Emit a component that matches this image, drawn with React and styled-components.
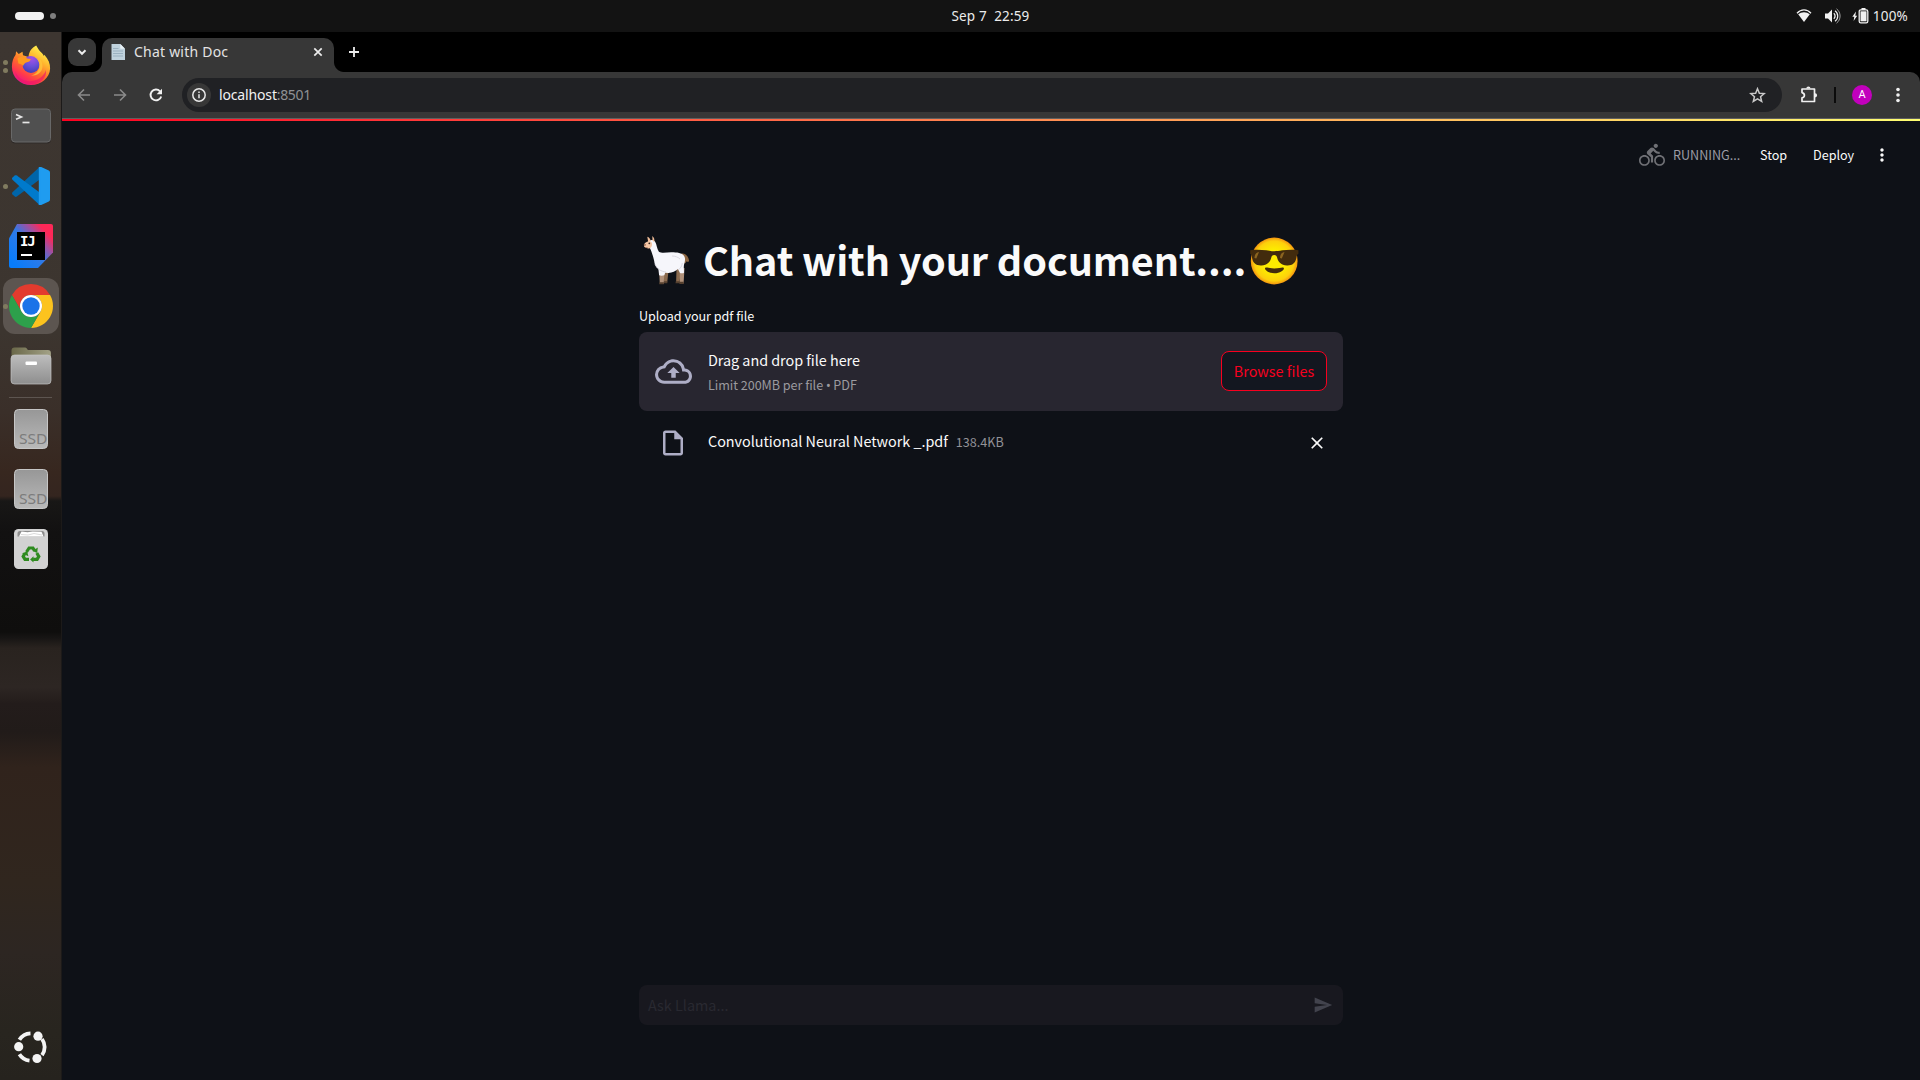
import React from "react";
import styled, { createGlobalStyle } from "styled-components";
import {
  MdDirectionsBike,
  MdOutlineCloudUpload,
  MdOutlineInsertDriveFile,
  MdClose,
  MdSend,
  MdMoreVert,
} from "react-icons/md";

const ui = `"Noto Sans", "Open Sans", sans-serif`;
const sourceSans = `"Noto Sans CJK SC", "Noto Sans CJK JP", sans-serif`;

const GlobalStyle = createGlobalStyle`
  * { box-sizing: border-box; }
  body { margin: 0; background: #000; overflow: hidden; }
  svg { display: block; flex: none; }
`;

const Desktop = styled.div`
  width: 1920px;
  height: 1080px;
  display: flex;
  flex-direction: column;
  font-family: ${ui};
  overflow: hidden;
`;

/* ---------- text ---------- */
const Text = styled.span`
  font-family: ${(p) => p.$font || sourceSans};
  font-size: ${(p) => p.$size}px;
  font-weight: ${(p) => p.$weight || 400};
  line-height: ${(p) => p.$line || 24}px;
  letter-spacing: ${(p) => p.$track || 0}px;
  color: ${(p) => p.$color || "#fafafa"};
  white-space: pre;
`;
const Bullet = styled.span`
  font-family: ${ui};
`;

/* ---------- top bar ---------- */
const TopBar = styled.header`
  height: 32px;
  flex: none;
  background: #131313;
  display: grid;
  grid-template-columns: 1fr auto 1fr;
  align-items: center;
  padding: 0 12px 0 15px;
`;
const Workspaces = styled.div`
  display: flex;
  align-items: center;
  gap: 6px;
`;
const ActiveWorkspace = styled.i`
  width: 29px;
  height: 8px;
  border-radius: 4px;
  background: #f2f2f2;
`;
const IdleWorkspace = styled.i`
  width: 6px;
  height: 6px;
  border-radius: 50%;
  background: #7f7f7f;
`;
const Clock = styled.div`
  display: flex;
  padding-left: 58px;
`;
const Tray = styled.div`
  display: flex;
  justify-content: flex-end;
  align-items: center;
`;
const TraySlot = styled.div`
  width: ${(p) => p.$w}px;
`;

/* ---------- dock ---------- */
const Workarea = styled.div`
  flex: 1;
  display: flex;
  min-height: 0;
`;
const Dock = styled.nav`
  width: 62px;
  flex: none;
  padding-top: 4px;
  display: flex;
  flex-direction: column;
  border-right: 1px solid #1c1a19;
  background: linear-gradient(
    to bottom,
    #3d3631 0px,
    #3c352f 300px,
    #3a2f29 380px,
    #37271f 440px,
    #34251f 464px,
    #181716 469px,
    #121111 500px,
    #0f0e0d 600px,
    #171514 606px,
    #29231f 616px,
    #2d2623 655px,
    #231c1b 672px,
    #211b19 700px,
    #30231c 735px,
    #30261e 850px,
    #2d2622 920px,
    #28251f 1000px,
    #26231e 1048px
  );
`;
const DockItem = styled.div`
  position: relative;
  height: 60px;
  width: 62px;
  flex: none;
  display: flex;
  align-items: center;
  justify-content: center;
`;
const DockTile = styled.div`
  width: 56px;
  height: 56px;
  border-radius: 12px;
  display: flex;
  align-items: center;
  justify-content: center;
  background: ${(p) => (p.$active ? "#5c5550" : "transparent")};
`;
const RunningDots = styled.div`
  position: absolute;
  left: 3px;
  top: 0;
  bottom: 0;
  display: flex;
  flex-direction: column;
  justify-content: center;
  gap: 3px;
`;
const RunningDot = styled.i`
  width: 5px;
  height: 5px;
  border-radius: 50%;
  background: #807b5f;
`;
const DockRule = styled.div`
  height: 1px;
  margin: 1px 9px;
  background: #5d5550;
`;
const DockSpacer = styled.div`
  flex: 1;
`;
const Launcher = styled(DockItem)`
  height: 67px;
`;

/* ---------- browser ---------- */
const Browser = styled.section`
  flex: 1;
  display: flex;
  flex-direction: column;
  background: #0e1117;
`;
const TabStrip = styled.div`
  height: 40px;
  flex: none;
  background: #000;
  display: flex;
  padding: 6px 0 0 6px;
`;
const TabSearch = styled.div`
  width: 28px;
  height: 28px;
  border-radius: 9px;
  background: #373737;
  display: flex;
  align-items: center;
  justify-content: center;
  margin-right: 6px;
`;
const Tab = styled.div`
  position: relative;
  width: 232px;
  height: 34px;
  border-radius: 10px 10px 0 0;
  background: #373737;
  display: flex;
  align-items: center;
  padding: 0 8px 6px 9px;
  &::before,
  &::after {
    content: "";
    position: absolute;
    bottom: 0;
    width: 10px;
    height: 10px;
  }
  &::before {
    left: -10px;
    background: radial-gradient(circle at 0 0, transparent 9.5px, #373737 10.5px);
  }
  &::after {
    right: -10px;
    background: radial-gradient(circle at 100% 0, transparent 9.5px, #373737 10.5px);
  }
`;
const TabTitle = styled.div`
  flex: 1;
  display: flex;
  padding-left: 9px;
`;
const NewTab = styled.div`
  width: 28px;
  height: 28px;
  margin-left: 6px;
  display: flex;
  align-items: center;
  justify-content: center;
`;
const ToolbarBack = styled.div`
  background: #000;
  flex: none;
`;
const Toolbar = styled.div`
  height: 46px;
  background: #373737;
  border-radius: 10px 10px 0 0;
  display: flex;
  align-items: center;
  padding-left: 4px;
`;
const IconButton = styled.div`
  width: 36px;
  height: 34px;
  display: flex;
  align-items: center;
  justify-content: center;
  margin-left: ${(p) => p.$ml || 0}px;
`;
const Omnibox = styled.div`
  width: 1600px;
  height: 34px;
  margin-left: 8px;
  border-radius: 17px;
  background: #202124;
  display: flex;
  align-items: center;
  padding: 0 16px 0 5px;
`;
const SiteInfo = styled.div`
  width: 24px;
  height: 24px;
  border-radius: 50%;
  background: #373737;
  display: flex;
  align-items: center;
  justify-content: center;
  margin-right: 8px;
`;
const Url = styled.div`
  flex: 1;
  display: flex;
`;
const ToolbarRule = styled.i`
  width: 2px;
  height: 16px;
  margin: 0 8px 0 7px;
  background: #0b0b0b;
`;
const Avatar = styled.div`
  width: 20px;
  height: 20px;
  border-radius: 50%;
  background: #c200bd;
  display: flex;
  align-items: center;
  justify-content: center;
`;
const ToolbarEdge = styled.div`
  height: 1px;
  flex: none;
  background: #5f5f5f;
`;
const Decoration = styled.div`
  height: 2px;
  flex: none;
  background: linear-gradient(90deg, #ff0020 0%, #ff2c34 15%, #ff8650 50%, #ffcd62 80%, #ffff72 100%);
`;

/* ---------- app page ---------- */
const AppPage = styled.main`
  flex: 1;
  display: flex;
  flex-direction: column;
  align-items: center;
`;
const StatusBar = styled.div`
  align-self: stretch;
  height: 68px;
  display: flex;
  justify-content: flex-end;
  align-items: center;
  padding-right: 28px;
`;
const StatusSlot = styled.div`
  width: ${(p) => p.$w}px;
  display: flex;
  align-items: center;
`;
const Column = styled.div`
  width: 704px;
  flex: 1;
  display: flex;
  flex-direction: column;
`;
const Heading = styled.h1`
  margin: 36px 0 8px;
  height: 72px;
  display: flex;
  align-items: center;
  padding-left: 3px;
`;
const HeadingText = styled.div`
  width: 547px;
  margin-left: 13px;
  height: 58px;
`;
const Label = styled.div`
  height: 24px;
  margin-top: -1px;
  display: flex;
  align-items: center;
`;
const Dropzone = styled.div`
  height: 79px;
  margin-top: 4px;
  border-radius: 8px;
  background: #282630;
  display: flex;
  align-items: center;
  padding: 0 16px;
`;
const DropText = styled.div`
  flex: 1;
  display: flex;
  flex-direction: column;
  gap: 1px;
  padding: 2px 0 0 16px;
`;
const BrowseButton = styled.button`
  width: 106px;
  height: 40px;
  padding: 0;
  margin-bottom: 1px;
  border-radius: 8px;
  border: 1px solid #f8001f;
  background: #131720;
  display: flex;
  align-items: center;
  justify-content: center;
`;
const FileRow = styled.div`
  height: 40px;
  margin-top: 11px;
  display: flex;
  align-items: center;
  padding: 0 16px;
`;
const FileIcon = styled.div`
  width: 36px;
  display: flex;
  justify-content: center;
  margin-right: 17px;
  padding-top: 1px;
`;
const FileName = styled.div`
  flex: 1;
  display: flex;
  gap: 8px;
  padding-bottom: 1px;
`;
const RemoveFile = styled.div`
  padding-top: 1px;
`;
const ChatInput = styled.div`
  margin-top: auto;
  margin-bottom: 55px;
  height: 40px;
  border-radius: 8px;
  background: #18181f;
  display: flex;
  align-items: center;
  justify-content: space-between;
  padding: 0 10px 0 9px;
`;

/* ---------- drawings ---------- */
const Firefox = () => (
  <svg width="40" height="42" viewBox="0 0 40 42">
    <defs>
      <linearGradient id="ffBody" x1="0.85" y1="0.1" x2="0.3" y2="1">
        <stop offset="0" stopColor="#fff44f" />
        <stop offset="0.3" stopColor="#ffb52e" />
        <stop offset="0.58" stopColor="#ff6a2b" />
        <stop offset="0.8" stopColor="#ff3550" />
        <stop offset="1" stopColor="#e3158f" />
      </linearGradient>
      <radialGradient id="ffGlobe" cx="0.55" cy="0.15" r="0.9">
        <stop offset="0" stopColor="#a650e8" />
        <stop offset="0.5" stopColor="#6a50d8" />
        <stop offset="1" stopColor="#3f3bb0" />
      </radialGradient>
    </defs>
    <g transform="translate(0 -1)">
      <path
        d="M25.2 1.5c1.6 2.4 2.2 4.4 4.3 6.3 1.500 1.400 2.700 2.600 3.300 4.300l.6-1.300c4 4.600 5.900 8.900 5.700 13.700C38.800 33.800 30.300 41 20 41 9.200 41 .9 33.200.9 22.700c0-5 1.400-8.600 3.700-11.900l.5-3.500 2.600 2.700 3.800-2.300.5 3.600 5.500 1.600c.4-5.200 3.200-9.300 7.700-11.400z"
        fill="url(#ffBody)"
      />
      <path d="M4 27c3 8 10 11 17 10 7-1 12-5 14-11 1 8-6 14.500-15 14.500C11 40.500 5 35 4 27z" fill="#ef1568" opacity="0.65" />
      <circle cx="20" cy="20.500" r="8.500" fill="url(#ffGlobe)" />
      <path d="M6.500 14.500c2-1.800 5-2.300 7.500-1 1.500.8 3 1.400 5.800 1.400-.4 2.600-2.300 2.800-4.600 3.600-1.800.6-2.200 2-3.200 3.400-1-1.500-3-2-4.600-2.300z" fill="#ff9a1f" />
      <path d="M20 12c4-.6 8.500 2.500 9 8.500.3-2 .1-4-1-6 3.500 3 4.500 8 2.500 12-1.800 3.500-6 5.500-10.500 5 5-1 8.500-5 8.500-10S24.500 12.300 20 12z" fill="#ffc53a" opacity="0.8" />
    </g>
  </svg>
);

const Terminal = () => (
  <svg width="42" height="36" viewBox="0 0 42 36">
    <rect x="1" y="1.500" width="40" height="34" rx="4" fill="#2e2a28" />
    <rect x="1.500" y="1" width="39" height="33" rx="3.500" fill="#505050" stroke="#686868" />
    <path d="M6 6.500l5.500 2.400L6 11.300" fill="none" stroke="#e6e6e6" strokeWidth="1.600" />
    <path d="M12.500 14.500h7" stroke="#e6e6e6" strokeWidth="1.700" />
  </svg>
);

const VsCode = () => (
  <svg width="40" height="40" viewBox="0 0 40 40">
    <path d="M28.500 1L1.500 26.200c-.7.700-.7 1.500 0 2.200l2.300 2.100c.7.500 1.300.5 2 0L30 12.500z" fill="#0065a9" />
    <path d="M28.500 39L1.500 13.800c-.7-.7-.7-1.500 0-2.200l2.300-2.100c.7-.5 1.300-.5 2 0L30 27.500z" fill="#007acc" />
    <path d="M28.500 39c-.9-.1-1.200-.5 0-1.300V2.300c-1-.9-.8-1.200 0-1.300 1-.2 1.600 0 2.300.3l7 3.300c.8.4 1.200 1 1.200 1.900v27c0 .9-.4 1.500-1.200 1.900l-7 3.300c-.7.300-1.300.5-2.300.3z" fill="#1f9cf0" />
    <path d="M28.500 1.200v37.600" stroke="#1f9cf0" strokeWidth="1.400" />
  </svg>
);

const Intellij = () => (
  <svg width="44" height="44" viewBox="0 0 44 44">
    <defs>
      <linearGradient id="ijBg" x1="0.1" y1="0.9" x2="1" y2="0.1">
        <stop offset="0" stopColor="#087cfa" />
        <stop offset="0.45" stopColor="#2f7ae8" />
        <stop offset="0.68" stopColor="#a04fa0" />
        <stop offset="0.86" stopColor="#fe2857" />
        <stop offset="1" stopColor="#fe2857" />
      </linearGradient>
    </defs>
    <path d="M8 0h34a2 2 0 0 1 2 2v26.500L29 44H2a2 2 0 0 1-2-2V14.500z" fill="url(#ijBg)" />
    <rect x="8" y="8" width="28" height="28" fill="#000" />
    <rect x="12" y="30" width="11" height="2" fill="#fff" />
    <text x="11" y="22" fontFamily="DejaVu Sans Mono, monospace" fontWeight="700" fontSize="14" letterSpacing="-1.200" fill="#fff">IJ</text>
  </svg>
);

const Chrome = () => (
  <svg width="44" height="44" viewBox="-22 -22 44 44">
    <path d="M0-22A22 22 0 0 1 19.050-11H0A11 11 0 0 0-9.530 5.500L-19.050-11A22 22 0 0 1 0-22z" fill="#e33b2e" />
    <path d="M19.050-11A22 22 0 0 1 0 22L9.530 5.500A11 11 0 0 0 0-11z" fill="#fcc31e" />
    <path d="M0 22A22 22 0 0 1-19.050-11L-9.530 5.500A11 11 0 0 0 9.530 5.500z" fill="#2da04b" />
    <circle r="11" fill="#fff" />
    <circle r="8.700" fill="#1a73e8" />
  </svg>
);

const Files = () => (
  <svg width="42" height="38" viewBox="0 0 42 38">
    <defs>
      <linearGradient id="folder" x1="0" y1="0" x2="0" y2="1">
        <stop offset="0" stopColor="#bdbdbd" />
        <stop offset="1" stopColor="#8e8e8e" />
      </linearGradient>
      <linearGradient id="folderTab" x1="0" y1="0" x2="1" y2="0">
        <stop offset="0" stopColor="#6a6849" />
        <stop offset="1" stopColor="#a3a287" />
      </linearGradient>
    </defs>
    <path d="M1.500 12V3.500a3 3 0 0 1 3-3h10c1.500 0 2 .6 2.600 1.400l.8 1.100h20a3 3 0 0 1 3 3v6z" fill="url(#folderTab)" />
    <rect x="1" y="8" width="40" height="29" rx="3.500" fill="url(#folder)" stroke="#c4c4c4" strokeWidth="0.700" />
    <rect x="15.500" y="14.500" width="11.500" height="3.500" rx="1" fill="#fff" />
  </svg>
);

const Ssd = () => (
  <svg width="36" height="42" viewBox="0 0 36 42">
    <defs>
      <linearGradient id="ssd" x1="0" y1="0" x2="0" y2="1">
        <stop offset="0" stopColor="#979797" />
        <stop offset="1" stopColor="#b9b9b9" />
      </linearGradient>
    </defs>
    <rect x="1.500" y="1.500" width="33" height="39" rx="4" fill="url(#ssd)" stroke="#c6c6c6" />
    <text x="6" y="36" fontFamily="Noto Sans, sans-serif" fontSize="15" textLength="28.500" lengthAdjust="spacingAndGlyphs" fill="#7c7c7c">SSD</text>
  </svg>
);

const Trash = () => (
  <svg width="36" height="42" viewBox="0 0 36 42">
    <rect x="1" y="1" width="34" height="40" rx="4.500" fill="#d2d2d2" />
    <path d="M4.500 8.500V5.500a2.500 2.500 0 0 1 2.500-2.500h22a2.500 2.500 0 0 1 2.500 2.500v3z" fill="#8d8d8d" />
    <path d="M6 8.500L8.500 3.500l6 .8 5-.8 9 .3 2 4.700z" fill="#fff" />
    <path d="M8 6.500l7 .5 6-1.500 8 1.500" fill="none" stroke="#c8c8c8" strokeWidth="0.700" />
    <g fill="none" stroke="#2e8b1f" strokeWidth="3.200">
      <path d="M13.500 24l2.600-4h3.800l1.700 2.600" />
      <path d="M23.800 25l2 3.400-1.700 3h-4" />
      <path d="M16 31.400h-4l-1.800-3 1.500-2.600" />
    </g>
    <g fill="#2e8b1f">
      <path d="M24.800 19.500l-.6 5.600-4.700-2.200z" />
      <path d="M20.500 28.200v6.400l-3.400-3.200z" />
      <path d="M9 25.300l5.200-1.800 1.200 4.700z" />
    </g>
  </svg>
);

const Ubuntu = () => (
  <svg width="34" height="34" viewBox="-17 -17 34 34">
    <g fill="none" stroke="#f4f4f4" strokeWidth="3.800">
      <path d="M-11.600-7.200A13.700 13.700 0 0 1-.5-13.700" />
      <path d="M11-8A13.700 13.700 0 0 1 11 8.200" />
      <path d="M-11.600 7.200A13.700 13.700 0 0 0-1.500 13.600" />
    </g>
    <g fill="#f4f4f4">
      <circle cx="-12.300" cy="-.3" r="4.600" />
      <circle cx="7" cy="-10.800" r="4.600" />
      <circle cx="6" cy="11.500" r="4.600" />
    </g>
  </svg>
);

const Wifi = () => (
  <svg width="16" height="14" viewBox="0 0 16 14">
    <path d="M1 4.200C5-.2 11-.2 15 4.200" fill="none" stroke="#f2f2f2" strokeWidth="1.300" />
    <path d="M2.200 5.300C5.500 2.600 10.500 2.600 13.800 5.300L8 13z" fill="#f2f2f2" />
  </svg>
);
const Speaker = () => (
  <svg width="16" height="16" viewBox="0 0 16 16">
    <path d="M0 5.500h3L7 1.500v13L3 10.500H0z" fill="#f2f2f2" />
    <g fill="none" stroke="#f2f2f2">
      <path d="M8.800 5.300a3.500 3.500 0 0 1 0 5.400" strokeWidth="1.300" />
      <path d="M10 2.800a6.300 6.300 0 0 1 0 10.400" strokeWidth="1.200" />
      <path d="M11.500 .8a9 9 0 0 1 0 14.400" stroke="#9a9a9a" strokeWidth="1" />
    </g>
  </svg>
);
const Battery = () => (
  <svg width="17" height="16" viewBox="0 0 17 16">
    <path d="M4 3.500L.3 8.700h2L1.600 13l3.600-5.300H3.300z" fill="#f2f2f2" />
    <rect x="7.200" y="1.800" width="8.600" height="13" rx="1.600" fill="none" stroke="#f2f2f2" strokeWidth="1.300" />
    <rect x="9.500" y="0" width="4" height="2" fill="#f2f2f2" />
    <rect x="8.500" y="3.300" width="6" height="10" fill="#f2f2f2" />
  </svg>
);

const DocFavicon = () => (
  <svg width="14" height="16" viewBox="0 0 14 16">
    <path d="M.5 0h8.800L14 4.800V16H.5z" fill="#c0d2dd" />
    <path d="M9.300 0L14 4.800H9.300z" fill="#e9f2f7" />
    <path d="M2 4.500h5.500M2 7h10M2 9.500h10M2 12h10" stroke="#96adbc" strokeWidth="0.900" />
  </svg>
);

const Stroke = ({ size = 16, d, color = "#ececec", width = 1.6 }) => (
  <svg width={size} height={size} viewBox="0 0 16 16" fill="none" stroke={color} strokeWidth={width}>
    <path d={d} />
  </svg>
);

const Reload = () => (
  <svg width="16" height="16" viewBox="0 0 16 16">
    <path d="M13.200 9.400A5.400 5.400 0 1 1 12 4.300" fill="none" stroke="#f1f1f1" strokeWidth="1.900" />
    <path d="M14 1.800v5.400H8.600z" fill="#f1f1f1" />
  </svg>
);

const Puzzle = () => (
  <svg width="18" height="18" viewBox="0 0 18 18">
    <path d="M2 3h12.500v12.500H2v-3.600c1.500-.3 2.400-1.200 2.400-2.600S3.500 6.900 2 6.600z" fill="none" stroke="#f1f1f1" strokeWidth="1.700" strokeLinejoin="round" />
    <path d="M6.300 2.500a2.100 2.100 0 0 1 4.200 0zM15 7.200a2.100 2.100 0 0 1 0 4.200z" fill="#f1f1f1" />
  </svg>
);

const Llama = () => (
  <svg width="48" height="52" viewBox="0 0 48 52">
    <path d="M39 19c3-1.500 7 1 8 6.300.1 1-.5 2-1.500 1.500l-1.300-.4-.6 1.600-3.600 1z" fill="#8d6743" />
    <path d="M21.500 36h5l-1.300 11.500h-3.500zM34.500 34h4.500l-1.500 13.500h-3.400z" fill="#8a6a4e" />
    <path d="M17.200 36h5.300l-.8 13h-3.900zM37.800 34l4.700-1-.9 15.500h-3.800z" fill="#b0917a" />
    <path d="M17.500 47.300h4.300v2h-4.500zM37.500 46.800h4.200v2.200h-4.200zM22 46.300h3.300v2h-3.300zM33.800 46.300h3.500v2h-3.800z" fill="#55402f" />
    <path
      d="M6.800 6.200c1.800-1.900 4.900-1.700 6.300.6 1.600 2.400 1.700 6.700 3.800 10 3.500 2 8 .4 12.700.5 6.500.1 12.700.7 13.400 6.200.3 3.800-1.300 5.200-1.200 8.700l.2 5.500c-.8.600-2.600.8-4 .2l-2-3.900c-2.600 2.300-5.500 3.600-9.600 4l-3.200-.3-.9 2.500c-1.500.6-3.700.6-5.200.1l-.7-6.200c-2.400-1.900-4-4.800-4.300-8.700C10.800 20.500 9.500 16 7.700 12.700z"
      fill="#f6f6fb"
    />
    <path d="M13 29c2 5 6 7.500 11 8M36 35c2.600-1.600 4-4 4.300-7M30 21c3 0 6 1 8 3" fill="none" stroke="#d8d6df" strokeWidth="0.900" />
    <path d="M6.300 7.500L5.300 1.800c1.800.5 3 2 3.300 4zM10.500 5.800L10.300.9c1.800 1.400 2.500 3.500 1.900 6z" fill="#f0bd98" />
    <path d="M2 9.800c.4-1.800 2.600-3.300 4.600-3.600 2.400-.2 4 1.500 3.400 4-.3 2-1.700 3.400-3.700 3.200-2-.1-4.900-1-4.300-3.600z" fill="#f4c7a6" />
    <path d="M2 9.700l1.600-.2-.6 1.300zM3.200 12.500l2.600.2" fill="#7b5038" stroke="#8d5a45" strokeWidth="0.600" />
    <circle cx="7.300" cy="8.300" r="0.900" fill="#2e211b" />
  </svg>
);

const CoolFace = () => (
  <svg width="49" height="48" viewBox="0 0 49 48">
    <defs>
      <radialGradient id="cool" cx="0.5" cy="0.5" r="0.5">
        <stop offset="0.5" stopColor="#fdeb00" />
        <stop offset="0.85" stopColor="#fdd00c" />
        <stop offset="1" stopColor="#f49410" />
      </radialGradient>
    </defs>
    <circle cx="24.200" cy="24" r="23.400" fill="url(#cool)" />
    <path
      d="M.2 13.200c5-.7 11-.5 16 .1 3.500.6 5 .9 8 .9s4.500-.3 8-.9c5-.6 11-.8 16.200-.1v3.600c-1.600.8-1.600 1.800-2 4-.9 5.500-4.200 7.900-9.400 7.700-6-.3-8.700-3.400-9.900-8-.4-1.700-1-2.600-2.900-2.600s-2.500.9-2.900 2.600c-1.200 4.600-3.900 7.700-9.900 8-5.200.2-8.500-2.200-9.400-7.700-.4-2.200-.2-3.200-1.800-4z"
      fill="#422b0d"
    />
    <path d="M4.500 21c0-3 1.500-5.700 4.500-5.900l-2.700 6.500zM30 21c0-3 1.500-5.700 4.500-5.900l-2.700 6.500z" fill="#8b6420" />
    <path d="M15.300 30.800c1.500-1 3 .6 8.900.6s7.800-1.600 9.400-.6c1.500 1-2.600 5.400-9.300 5.400s-10.400-4.400-9-5.400z" fill="#422b0d" />
  </svg>
);

const dockApps = [
  { id: "firefox", icon: <Firefox />, dots: 2 },
  { id: "terminal", icon: <Terminal />, dots: 0 },
  { id: "code", icon: <VsCode />, dots: 1 },
  { id: "idea", icon: <Intellij />, dots: 0 },
  { id: "chrome", icon: <Chrome />, dots: 1, active: true },
  { id: "files", icon: <Files />, dots: 0 },
];
const dockPlaces = [
  { id: "ssd-a", icon: <Ssd /> },
  { id: "ssd-b", icon: <Ssd /> },
  { id: "trash", icon: <Trash /> },
];

const DockEntry = ({ icon, dots = 0, active }) => (
  <DockItem>
    <DockTile $active={active}>{icon}</DockTile>
    <RunningDots>
      {Array.from({ length: dots }, (_, i) => (
        <RunningDot key={i} />
      ))}
    </RunningDots>
  </DockItem>
);

export default function App() {
  return (
    <Desktop>
      <GlobalStyle />
      <TopBar>
        <Workspaces>
          <ActiveWorkspace />
          <IdleWorkspace />
        </Workspaces>
        <Clock>
          <Text $font={ui} $size={13.5} $line={28} $track={0.15} $color="#ececec">{"Sep 7  22:59"}</Text>
        </Clock>
        <Tray>
          <TraySlot $w={29}><Wifi /></TraySlot>
          <TraySlot $w={27}><Speaker /></TraySlot>
          <TraySlot $w={21}><Battery /></TraySlot>
          <Text $font={ui} $size={13.5} $line={32} $track={0.2} $color="#ececec">100%</Text>
        </Tray>
      </TopBar>

      <Workarea>
        <Dock>
          {dockApps.map(({ id, ...rest }) => (
            <DockEntry key={id} {...rest} />
          ))}
          <DockRule />
          {dockPlaces.map(({ id, ...rest }) => (
            <DockEntry key={id} {...rest} />
          ))}
          <DockSpacer />
          <Launcher><Ubuntu /></Launcher>
        </Dock>

        <Browser>
          <TabStrip>
            <TabSearch><Stroke d="M4.500 6.300L8 9.800l3.500-3.500" width={2} /></TabSearch>
            <Tab>
              <DocFavicon />
              <TabTitle>
                <Text $font={ui} $size={14} $line={28} $track={0.22} $color="#e3e3e3">Chat with Doc</Text>
              </TabTitle>
              <Stroke d="M4.300 4.300l7.400 7.400M11.700 4.300l-7.400 7.400" width={1.7} />
            </Tab>
            <NewTab><Stroke d="M8 3v10M3 8h10" width={1.8} /></NewTab>
          </TabStrip>
          <ToolbarBack>
            <Toolbar>
              <IconButton><Stroke d="M14 8H3M8 2.500L2.500 8L8 13.500" color="#8a8a8a" width={1.6} /></IconButton>
              <IconButton><Stroke d="M2 8h11M8 2.500L13.500 8L8 13.500" color="#8a8a8a" width={1.6} /></IconButton>
              <IconButton><Reload /></IconButton>
              <Omnibox>
                <SiteInfo>
                  <svg width="16" height="16" viewBox="0 0 16 16">
                    <circle cx="8" cy="8" r="6.200" fill="none" stroke="#e8e8e8" strokeWidth="1.500" />
                    <path d="M8 7.200v4M8 4.500v1.600" stroke="#e8e8e8" strokeWidth="1.500" />
                  </svg>
                </SiteInfo>
                <Url>
                  <Text $font={ui} $size={14} $line={32} $track={-0.15} $color="#f2f2f2">localhost</Text>
                  <Text $font={ui} $size={14} $line={32} $track={-0.35} $color="#8f9194">:8501</Text>
                </Url>
                <Stroke
                  size={17}
                  d="M8 1.600l1.750 4.250 4.600.35-3.500 3 1.100 4.450L8 11.250l-3.950 2.400 1.100-4.450-3.500-3 4.600-.35z"
                  color="#c9c9c9"
                  width={1.4}
                />
              </Omnibox>
              <IconButton $ml={9}><Puzzle /></IconButton>
              <ToolbarRule />
              <IconButton>
                <Avatar><Text $font={`Roboto, sans-serif`} $size={11} $line={20} $color="#fff">A</Text></Avatar>
              </IconButton>
              <IconButton>
                <svg width="4" height="16" viewBox="0 0 4 16" fill="#f1f1f1">
                  <circle cx="2" cy="2.500" r="1.800" />
                  <circle cx="2" cy="8" r="1.800" />
                  <circle cx="2" cy="13.500" r="1.800" />
                </svg>
              </IconButton>
            </Toolbar>
          </ToolbarBack>
          <ToolbarEdge />
          <Decoration />

          <AppPage>
            <StatusBar>
              <StatusSlot $w={34}><MdDirectionsBike size={26} color="#6f7075" /></StatusSlot>
              <StatusSlot $w={87}><Text $size={12.6} $color="#9b9ca5">RUNNING...</Text></StatusSlot>
              <StatusSlot $w={53}><Text $size={12.6}>Stop</Text></StatusSlot>
              <StatusSlot $w={59}><Text $size={12.6}>Deploy</Text></StatusSlot>
              <MdMoreVert size={20} color="#fafafa" />
            </StatusBar>
            <Column>
              <Heading>
                <Llama />
                <HeadingText>
                  <Text $size={39.6} $weight={700} $line={53} $track={-0.1}>Chat with your document....</Text>
                </HeadingText>
                <CoolFace />
              </Heading>
              <Label><Text $size={12.6} $track={-0.03}>Upload your pdf file</Text></Label>
              <Dropzone>
                <MdOutlineCloudUpload size={37} color="#aeaec6" />
                <DropText>
                  <Text $size={14.4} $track={-0.04}>Drag and drop file here</Text>
                  <Text $size={12.6} $track={-0.04} $color="#9b9a9f">Limit 200MB per file <Bullet>•</Bullet> PDF</Text>
                </DropText>
                <BrowseButton><Text $size={14.4} $color="#f8001f">Browse files</Text></BrowseButton>
              </Dropzone>
              <FileRow>
                <FileIcon><MdOutlineInsertDriveFile size={30} color="#aeaec6" /></FileIcon>
                <FileName>
                  <Text $size={14.4} $track={-0.03}>Convolutional Neural Network _.pdf</Text>
                  <Text $size={12.6} $line={26} $color="#929297">138.4KB</Text>
                </FileName>
                <RemoveFile><MdClose size={20} color="#fafafa" /></RemoveFile>
              </FileRow>
              <ChatInput>
                <Text $size={14.4} $color="#292931">Ask Llama...</Text>
                <MdSend size={20} color="#42434d" />
              </ChatInput>
            </Column>
          </AppPage>
        </Browser>
      </Workarea>
    </Desktop>
  );
}
